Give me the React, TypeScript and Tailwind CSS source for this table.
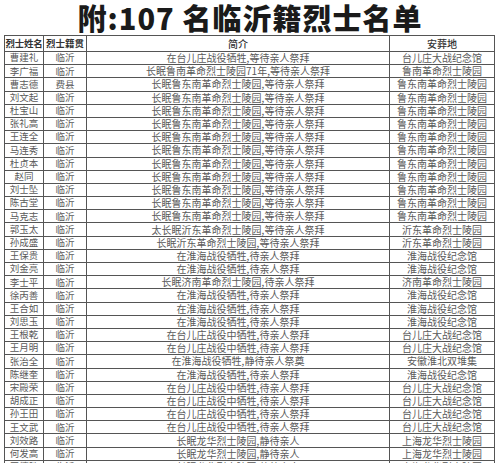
const rows: [string, string, string, string][] = [
  ["曹建礼", "临沂", "在台儿庄战役牺牲,等待亲人祭拜", "台儿庄大战纪念馆"],
  ["李广福", "临沂", "长眠鲁南革命烈士陵园71年,等待亲人祭拜", "鲁南革命烈士陵园"],
  ["曹志德", "费县", "长眠鲁东南革命烈士陵园,等待亲人祭拜", "鲁东南革命烈士陵园"],
  ["刘文起", "临沂", "长眠鲁东南革命烈士陵园,等待亲人祭拜", "鲁东南革命烈士陵园"],
  ["杜宝山", "临沂", "长眠鲁东南革命烈士陵园,等待亲人祭拜", "鲁东南革命烈士陵园"],
  ["张礼高", "临沂", "长眠鲁东南革命烈士陵园,等待亲人祭拜", "鲁东南革命烈士陵园"],
  ["王连全", "临沂", "长眠鲁东南革命烈士陵园,等待亲人祭拜", "鲁东南革命烈士陵园"],
  ["马连秀", "临沂", "长眠鲁东南革命烈士陵园,等待亲人祭拜", "鲁东南革命烈士陵园"],
  ["杜贞本", "临沂", "长眠鲁东南革命烈士陵园,等待亲人祭拜", "鲁东南革命烈士陵园"],
  ["赵同", "临沂", "长眠鲁东南革命烈士陵园,等待亲人祭拜", "鲁东南革命烈士陵园"],
  ["刘士坠", "临沂", "长眠鲁东南革命烈士陵园,等待亲人祭拜", "鲁东南革命烈士陵园"],
  ["陈古堂", "临沂", "长眠鲁东南革命烈士陵园,等待亲人祭拜", "鲁东南革命烈士陵园"],
  ["马克志", "临沂", "长眠鲁东南革命烈士陵园,等待亲人祭拜", "鲁东南革命烈士陵园"],
  ["郭玉太", "临沂", "太长眠沂东革命烈士陵园,等待亲人祭拜", "沂东革命烈士陵园"],
  ["孙成盛", "临沂", "长眠沂东革命烈士陵园,等待亲人祭拜", "沂东革命烈士陵园"],
  ["王保贵", "临沂", "在淮海战役牺牲,待亲人祭拜", "淮海战役纪念馆"],
  ["刘金亮", "临沂", "在淮海战役牺牲,待亲人祭拜", "淮海战役纪念馆"],
  ["李士平", "临沂", "长眠济南革命烈士陵园,待亲人祭拜", "济南革命烈士陵园"],
  ["徐丙善", "临沂", "在淮海战役牺牲,待亲人祭拜", "淮海战役纪念馆"],
  ["王合如", "临沂", "在淮海战役牺牲,待亲人祭拜", "淮海战役纪念馆"],
  ["刘思玉", "临沂", "在淮海战役牺牲,待亲人祭拜", "淮海战役纪念馆"],
  ["王根乾", "临沂", "在台儿庄战役中牺牲,待亲人祭拜", "台儿庄大战纪念馆"],
  ["王月明", "临沂", "在台儿庄战役中牺牲,待亲人祭拜", "台儿庄大战纪念馆"],
  ["张治全", "临沂", "在淮海战役牺牲,静待亲人祭奠", "安徽淮北双堆集"],
  ["陈继奎", "临沂", "在淮海战役牺牲,待亲人祭拜", "淮海战役纪念馆"],
  ["宋殿荣", "临沂", "在台儿庄战役中牺牲,待亲人祭拜", "台儿庄大战纪念馆"],
  ["胡成正", "临沂", "在台儿庄战役中牺牲,待亲人祭拜", "台儿庄大战纪念馆"],
  ["孙王田", "临沂", "在台儿庄战役中牺牲,待亲人祭拜", "台儿庄大战纪念馆"],
  ["王文武", "临沂", "在台儿庄战役中牺牲,待亲人祭拜", "台儿庄大战纪念馆"],
  ["刘效路", "临沂", "长眠龙华烈士陵园,静待亲人", "上海龙华烈士陵园"],
  ["何发高", "临沂", "长眠龙华烈士陵园,静待亲人", "上海龙华烈士陵园"],
  ["王德胜", "临沂", "长眠龙华烈士陵园,静待亲人", "上海龙华烈士陵园"],
]

export default function App() {
  return (
    <div
      className="h-[463px] w-[500px] overflow-hidden bg-white"
      style={{ fontFamily: '"Noto Sans CJK SC", sans-serif' }}
    >
      <h1 className="flex h-[35px] items-center justify-center text-[29px] font-black leading-none tracking-[1px] text-[#1a1a1a]">
        附:107 名临沂籍烈士名单
      </h1>
      <table className="ml-[4px] w-[490px] table-fixed border-collapse border border-[#555] text-[#5a5a5a]">
        <colgroup>
          <col className="w-[39px]" />
          <col className="w-[43px]" />
          <col className="w-[303px]" />
          <col className="w-[105px]" />
        </colgroup>
        <thead>
          <tr className="h-[16px] text-[#333]">
            <th className="overflow-visible whitespace-nowrap border border-[#555] p-0 text-[9.5px] font-bold leading-none tracking-[-0.3px]">
              烈士姓名
            </th>
            <th className="whitespace-nowrap border border-[#555] p-0 text-[9.5px] font-bold leading-none">烈士籍贯</th>
            <th className="border border-[#555] p-0 text-[10px] font-medium leading-none">简介</th>
            <th className="border border-[#555] p-0 text-[10px] font-medium leading-none">安葬地</th>
          </tr>
        </thead>
        <tbody>
          {rows.map(([name, home, intro, place], i) => (
            <tr key={i} className="h-[13.2px]">
              <td className="whitespace-nowrap border border-[#555] p-0 text-center text-[9.5px] leading-none">{name}</td>
              <td className="whitespace-nowrap border border-[#555] p-0 text-center text-[9.5px] leading-none">{home}</td>
              <td className="whitespace-nowrap border border-[#555] p-0 text-center text-[10px] leading-none">{intro}</td>
              <td className="whitespace-nowrap border border-[#555] p-0 text-center text-[10px] leading-none">{place}</td>
            </tr>
          ))}
        </tbody>
      </table>
    </div>
  )
}
